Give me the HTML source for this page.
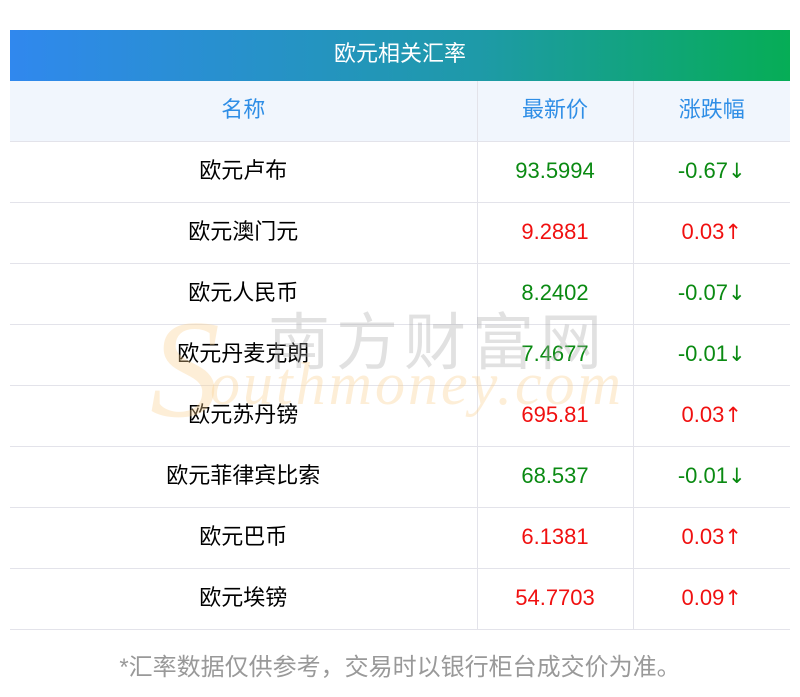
<!DOCTYPE html>
<html><head><meta charset="utf-8"><style>
body{margin:0;width:800px;height:697px;background:#fff;font-family:"Liberation Sans","Noto Sans CJK SC",sans-serif;position:relative;overflow:hidden}
.t{position:absolute;left:10px;top:30px;width:780px}
.h{height:51px;background:linear-gradient(90deg,#3088ee,#1e9aa8 60%,#06ad56);color:#fff;font-size:22px;text-align:center;line-height:47px}
table{border-collapse:collapse;width:780px;table-layout:fixed}
td{height:57px;border-bottom:1px solid #e3e3ea;text-align:center;font-size:22px;padding:0 0 3px 0;line-height:22px}
td+td{border-left:1px solid #e3e3ea}
tr.hd td{background:#f1f6fd;color:#2f8ee6}
.g{color:#0a8a12}.r{color:#f01010}
.a{font-family:"DejaVu Sans",sans-serif;font-size:21px}
.wm1{position:absolute;left:268px;top:292px;font-size:62px;color:rgba(170,170,170,.35);letter-spacing:6px;font-family:"Noto Sans CJK SC",sans-serif;z-index:2;pointer-events:none}
.wm2{position:absolute;left:210px;top:350px;font-size:60px;color:rgba(250,205,140,.35);font-style:italic;letter-spacing:3px;font-family:"Liberation Serif",serif;z-index:2}
.wmS{position:absolute;left:150px;top:300px;font-size:140px;color:rgba(250,205,140,.35);font-style:italic;font-family:"Liberation Serif",serif;z-index:2;line-height:1}
.f{position:absolute;top:647px;left:0;width:800px;text-align:center;color:#999;font-size:24px}
</style></head><body>
<div class="t">
<div class="h">欧元相关汇率</div>
<table>
<colgroup><col style="width:467px"><col style="width:156px"><col style="width:157px"></colgroup>
<tr class="hd"><td>名称</td><td>最新价</td><td>涨跌幅</td></tr>
<tr><td>欧元卢布</td><td class="g">93.5994</td><td class="g">-0.67<span class="a">↓</span></td></tr>
<tr><td>欧元澳门元</td><td class="r">9.2881</td><td class="r">0.03<span class="a">↑</span></td></tr>
<tr><td>欧元人民币</td><td class="g">8.2402</td><td class="g">-0.07<span class="a">↓</span></td></tr>
<tr><td>欧元丹麦克朗</td><td class="g">7.4677</td><td class="g">-0.01<span class="a">↓</span></td></tr>
<tr><td>欧元苏丹镑</td><td class="r">695.81</td><td class="r">0.03<span class="a">↑</span></td></tr>
<tr><td>欧元菲律宾比索</td><td class="g">68.537</td><td class="g">-0.01<span class="a">↓</span></td></tr>
<tr><td>欧元巴币</td><td class="r">6.1381</td><td class="r">0.03<span class="a">↑</span></td></tr>
<tr><td>欧元埃镑</td><td class="r">54.7703</td><td class="r">0.09<span class="a">↑</span></td></tr>
</table>
</div>
<div class="wmS">S</div>
<div class="wm1">南方财富网</div>
<div class="wm2">outhmoney.com</div>
<div class="f">*汇率数据仅供参考，交易时以银行柜台成交价为准。</div>
</body></html>
